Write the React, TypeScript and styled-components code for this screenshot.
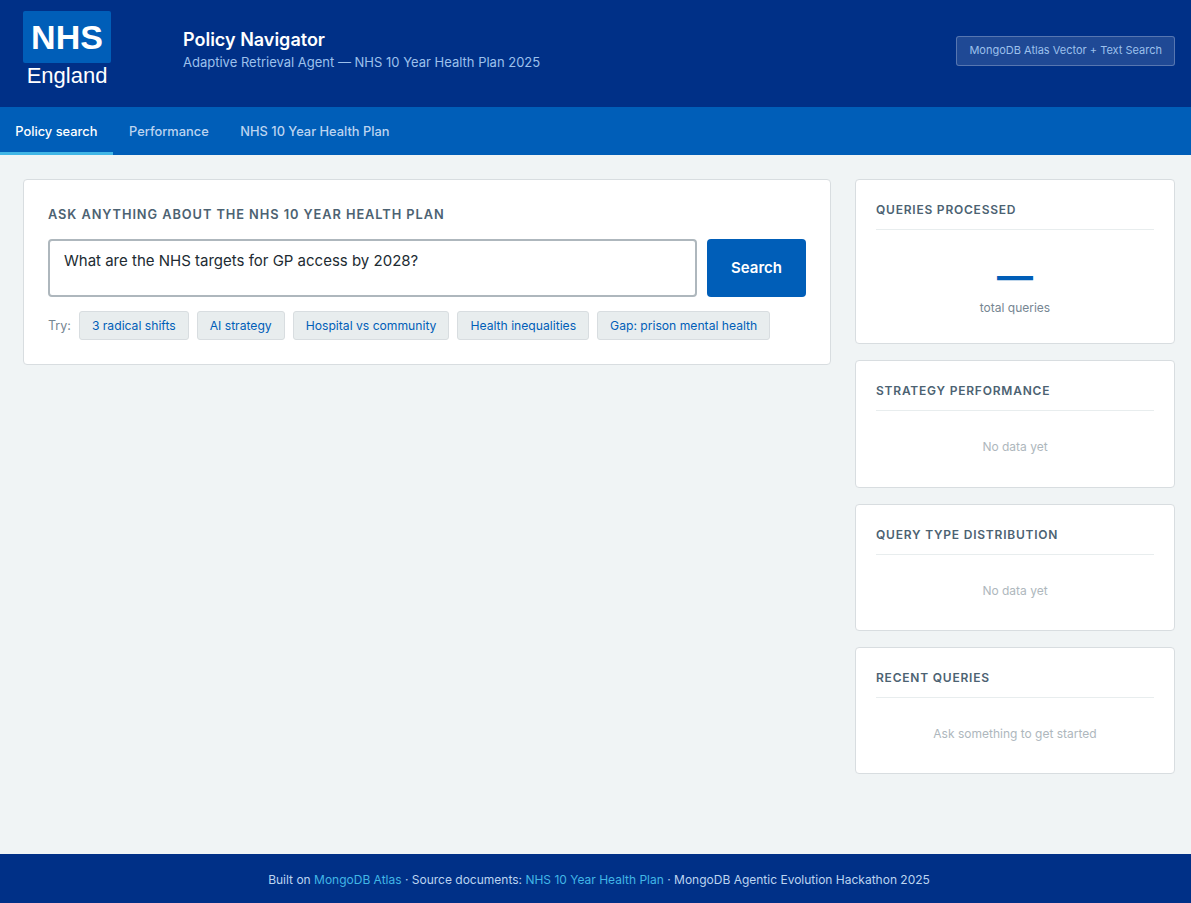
import React from "react";
import styled, { createGlobalStyle } from "styled-components";

const GlobalStyle = createGlobalStyle`
  * { box-sizing: border-box; }
  html, body { margin: 0; padding: 0; height: 100%; }
  body {
    background: #f0f4f5;
    color: #212b32;
    font-family: Inter, "Liberation Sans", sans-serif;
  }
`;

const Page = styled.div`
  min-height: 903px;
  display: flex;
  flex-direction: column;
`;

const Header = styled.header`
  height: 107px;
  background: #003087;
  display: flex;
  align-items: center;
  padding: 0 16px 8px 23px;
`;

const Logo = styled.div`
  width: 88px;
  margin-right: 72px;
  display: flex;
  flex-direction: column;
  align-items: center;
  font-family: "Liberation Sans", Arial, sans-serif;
  color: #fff;
`;

const LogoBox = styled.div`
  width: 88px;
  height: 52px;
  background: #005eb8;
  border-radius: 2px;
  display: flex;
  align-items: center;
  justify-content: center;
  font-size: 34px;
  font-weight: 700;
`;

const LogoName = styled.div`
  font-size: 22px;
  line-height: 25px;
`;

const Titles = styled.div`
  flex: 1;
`;

const Title = styled.h1`
  margin: 0;
  font-size: 18px;
  line-height: 22px;
  font-weight: 600;
  color: #fff;
`;

const Subtitle = styled.div`
  margin-top: 2px;
  font-size: 13px;
  line-height: 18px;
  color: #9cc0ec;
`;

const Badge = styled.div`
  height: 30px;
  margin-top: 2px;
  padding: 0 12px 2px;
  display: flex;
  align-items: center;
  font-size: 11px;
  color: #9cc0ec;
  background: rgba(255, 255, 255, 0.12);
  border: 1px solid rgba(255, 255, 255, 0.25);
  border-radius: 3px;
`;

const Nav = styled.nav`
  height: 48px;
  background: #005eb8;
  display: flex;
`;

const Tab = styled.a<{ $active?: boolean }>`
  height: 48px;
  padding: 3px 15.8px 0;
  display: flex;
  align-items: center;
  font-size: 12.85px;
  font-weight: 500;
  color: ${(p) => (p.$active ? "#fff" : "#bcd4f0")};
  border-bottom: 3px solid ${(p) => (p.$active ? "#41b6e6" : "transparent")};

  &:first-child {
    padding-left: 15.3px;
  }
`;

const Main = styled.main`
  flex: 1;
  display: grid;
  grid-template-columns: 1fr 320px;
  gap: 24px;
  align-items: start;
  padding: 24px 16px 24px 23px;
`;

const Card = styled.section`
  background: #fff;
  border: 1px solid #d8dde0;
  border-radius: 4px;
`;

const SearchCard = styled(Card)`
  padding: 24px;
`;

const SearchLabel = styled.div`
  font-size: 12.8px;
  line-height: 21px;
  font-weight: 600;
  letter-spacing: 0.93px;
  text-transform: uppercase;
  color: #4c6272;
  margin-bottom: 14px;
`;

const SearchRow = styled.div`
  display: flex;
  gap: 10px;
`;

const QueryBox = styled.div`
  flex: 1;
  height: 58px;
  padding: 10px 14px;
  border: 2px solid #aeb7bd;
  border-radius: 4px;
  font-size: 15px;
  line-height: 20px;
  color: #212b32;
`;

const SearchButton = styled.button`
  width: 99px;
  height: 58px;
  padding: 0 0 2px;
  border: none;
  border-radius: 4px;
  background: #005eb8;
  color: #fff;
  font-family: inherit;
  font-size: 15px;
  font-weight: 600;
`;

const Suggestions = styled.div`
  margin-top: 14px;
  display: flex;
  align-items: center;
  gap: 8px;
`;

const TryLabel = styled.span`
  font-size: 12.5px;
  color: #768692;
`;

const Chip = styled.button`
  height: 29px;
  padding: 0 12px;
  background: #e8edee;
  border: 1px solid #d8dde0;
  border-radius: 3px;
  color: #005eb8;
  font-family: inherit;
  font-size: 12.15px;
  font-weight: 400;
`;

const Side = styled.aside`
  display: flex;
  flex-direction: column;
  gap: 16px;
`;

const Panel = styled(Card)<{ $height: number }>`
  height: ${(p) => p.$height}px;
  padding: 20px 20px 0;
`;

const PanelTitle = styled.div`
  font-size: 12px;
  line-height: 20px;
  font-weight: 600;
  letter-spacing: 0.78px;
  text-transform: uppercase;
  color: #4c6272;
  padding-bottom: 9px;
  border-bottom: 1px solid #e8edee;
`;

const Stat = styled.div`
  text-align: center;
`;

const StatValue = styled.div`
  margin-top: 24px;
  font-size: 36px;
  line-height: 44px;
  font-weight: 700;
  color: #005eb8;
`;

const StatLabel = styled.div`
  margin-top: 2px;
  font-size: 12px;
  line-height: 16px;
  color: #768692;
`;

const Empty = styled.div`
  padding-top: 28px;
  text-align: center;
  font-size: 12px;
  line-height: 16px;
  color: #aeb7bd;
`;

const Footer = styled.footer`
  height: 49px;
  padding: 2px 0 0 7px;
  background: #003087;
  display: flex;
  align-items: center;
  justify-content: center;
  font-size: 12px;
  color: #bcd4f0;
  white-space: pre;
`;

const FooterLink = styled.a`
  color: #41b6e6;
`;

const chips = [
  "3 radical shifts",
  "AI strategy",
  "Hospital vs community",
  "Health inequalities",
  "Gap: prison mental health",
];

const App: React.FC = () => {
  return (
    <Page>
      <GlobalStyle />
      <Header>
        <Logo>
          <LogoBox>NHS</LogoBox>
          <LogoName>England</LogoName>
        </Logo>
        <Titles>
          <Title>Policy Navigator</Title>
          <Subtitle>Adaptive Retrieval Agent — NHS 10 Year Health Plan 2025</Subtitle>
        </Titles>
        <Badge>MongoDB Atlas Vector + Text Search</Badge>
      </Header>
      <Nav>
        <Tab $active>Policy search</Tab>
        <Tab>Performance</Tab>
        <Tab>NHS 10 Year Health Plan</Tab>
      </Nav>
      <Main>
        <SearchCard>
          <SearchLabel>Ask anything about the NHS 10 Year Health Plan</SearchLabel>
          <SearchRow>
            <QueryBox>What are the NHS targets for GP access by 2028?</QueryBox>
            <SearchButton>Search</SearchButton>
          </SearchRow>
          <Suggestions>
            <TryLabel>Try:</TryLabel>
            {chips.map((c) => (
              <Chip key={c}>{c}</Chip>
            ))}
          </Suggestions>
        </SearchCard>
        <Side>
          <Panel $height={165}>
            <PanelTitle>Queries processed</PanelTitle>
            <Stat>
              <StatValue>—</StatValue>
              <StatLabel>total queries</StatLabel>
            </Stat>
          </Panel>
          <Panel $height={128}>
            <PanelTitle>Strategy performance</PanelTitle>
            <Empty>No data yet</Empty>
          </Panel>
          <Panel $height={127}>
            <PanelTitle>Query type distribution</PanelTitle>
            <Empty>No data yet</Empty>
          </Panel>
          <Panel $height={127}>
            <PanelTitle>Recent queries</PanelTitle>
            <Empty>Ask something to get started</Empty>
          </Panel>
        </Side>
      </Main>
      <Footer>
        Built on <FooterLink>MongoDB Atlas</FooterLink> · Source documents: <FooterLink>NHS 10 Year Health Plan</FooterLink> · MongoDB Agentic Evolution Hackathon 2025
      </Footer>
    </Page>
  );
};

export default App;
